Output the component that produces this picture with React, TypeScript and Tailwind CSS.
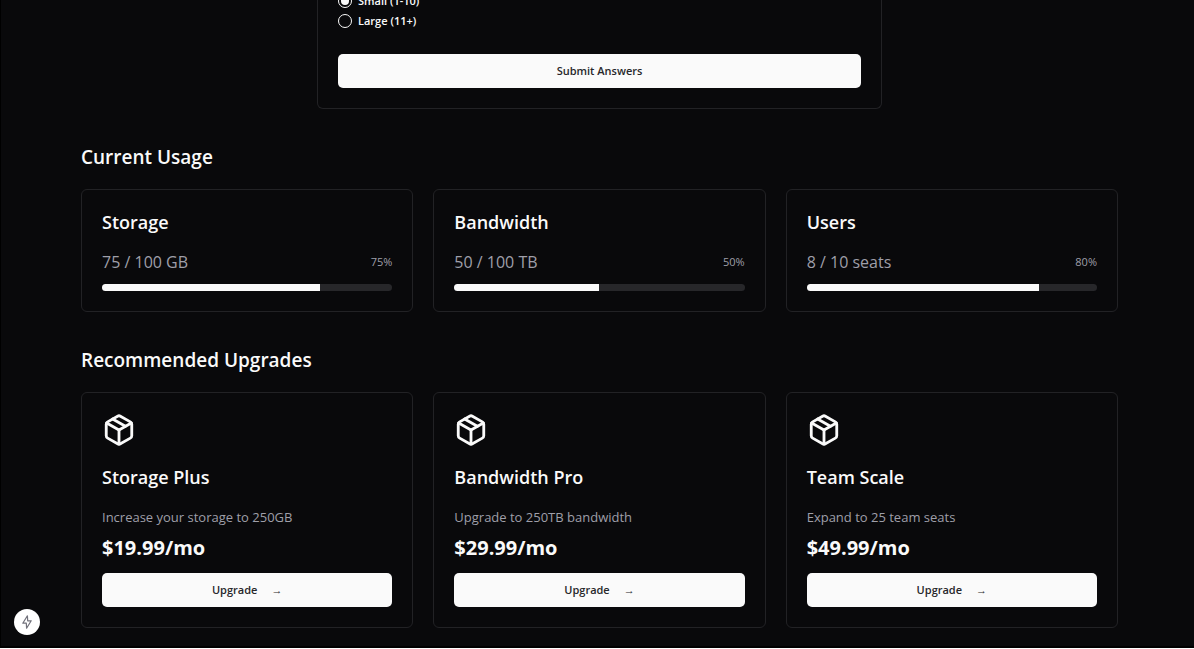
import { useState } from "react";
import { Package } from "lucide-react";

const usage = [
  { name: "Storage", detail: "75 / 100 GB", percent: 75 },
  { name: "Bandwidth", detail: "50 / 100 TB", percent: 50 },
  { name: "Users", detail: "8 / 10 seats", percent: 80 },
];

const upgrades = [
  { name: "Storage Plus", detail: "Increase your storage to 250GB", price: "$19.99/mo" },
  { name: "Bandwidth Pro", detail: "Upgrade to 250TB bandwidth", price: "$29.99/mo" },
  { name: "Team Scale", detail: "Expand to 25 team seats", price: "$49.99/mo" },
];

const teamSizes = ["Small (1-10)", "Large (11+)"];

function TeamSizeForm() {
  const [size, setSize] = useState(teamSizes[0]);
  return (
    <form
      onSubmit={(e) => e.preventDefault()}
      className="mx-auto w-full max-w-[565px] rounded-b-md border border-t-0 border-[#222225] px-5 pb-5"
    >
      <fieldset aria-label="Team size" className="-mt-[7px] flex flex-col gap-1">
        {teamSizes.map((label) => (
          <label key={label} className="flex h-4 items-center gap-1.5 text-[11px] leading-4 font-semibold">
            <input
              type="radio"
              name="team-size"
              checked={size === label}
              onChange={() => setSize(label)}
              className="size-3.5 appearance-none rounded-full border border-neutral-50 checked:bg-neutral-50 checked:bg-clip-content checked:p-0.5"
            />
            {label}
          </label>
        ))}
      </fieldset>
      <button type="submit" className="mt-[25px] h-[34px] w-full rounded-[5px] bg-neutral-50 text-[11px] font-semibold text-zinc-800">
        Submit Answers
      </button>
    </form>
  );
}

export default function App() {
  return (
    <div className="min-h-screen border-b-2 border-l border-black bg-[#09090b] font-['Open_Sans','Noto_Sans',sans-serif] text-neutral-50">
      <main className="pr-[76px] pb-[18px] pl-20">
        <TeamSizeForm />

        <section className="mt-[34px]">
          <h2 className="text-[19px] leading-7 font-semibold">Current Usage</h2>
          <div className="mt-[18px] grid grid-cols-3 gap-5">
            {usage.map((item) => (
              <article key={item.name} className="rounded-md border border-[#222225] p-5">
                <h3 className="text-[18px] leading-6 font-semibold">{item.name}</h3>
                <div className="mt-4 flex h-6 items-center justify-between text-zinc-400">
                  <span className="text-[16px]">{item.detail}</span>
                  <span className="text-[11px]">{item.percent}%</span>
                </div>
                <div
                  role="progressbar"
                  aria-label={item.name}
                  aria-valuenow={item.percent}
                  className="mt-2.5 h-[7px] overflow-hidden rounded-full bg-zinc-800"
                >
                  <div className="h-full bg-neutral-50" style={{ width: `${item.percent}%` }} />
                </div>
              </article>
            ))}
          </div>
        </section>

        <section className="mt-[34px]">
          <h2 className="text-[19px] leading-7 font-semibold">Recommended Upgrades</h2>
          <div className="mt-[18px] grid grid-cols-3 gap-5">
            {upgrades.map((item) => (
              <article key={item.name} className="rounded-md border border-[#222225] p-5">
                <Package className="size-[34px]" strokeWidth={2} aria-hidden="true" />
                <h3 className="mt-[18px] text-[18px] leading-6 font-semibold">{item.name}</h3>
                <p className="mt-[18px] text-[13px] leading-5 text-zinc-400">{item.detail}</p>
                <p className="mt-[9px] text-[20px] leading-6 font-bold">{item.price}</p>
                <button
                  type="button"
                  className="mt-[13px] flex h-[34px] w-full items-center justify-center gap-3.5 rounded-[5px] bg-neutral-50 text-[11px] font-semibold text-zinc-800"
                >
                  Upgrade <span aria-hidden="true">→</span>
                </button>
              </article>
            ))}
          </div>
        </section>
      </main>

      <button
        type="button"
        aria-label="Open developer tools"
        className="fixed bottom-3.5 left-3.5 flex size-[26px] items-center justify-center rounded-full bg-white text-zinc-500"
      >
        <svg viewBox="0 0 10 14" className="h-3.5 w-2.5" fill="none" stroke="currentColor" strokeWidth="1.2" strokeLinejoin="round">
          <path d="M5.4 0.8 L0.8 8.2 H4.3 L4.6 13.2 L9.2 5.8 H5.7 Z" />
        </svg>
      </button>
    </div>
  );
}
